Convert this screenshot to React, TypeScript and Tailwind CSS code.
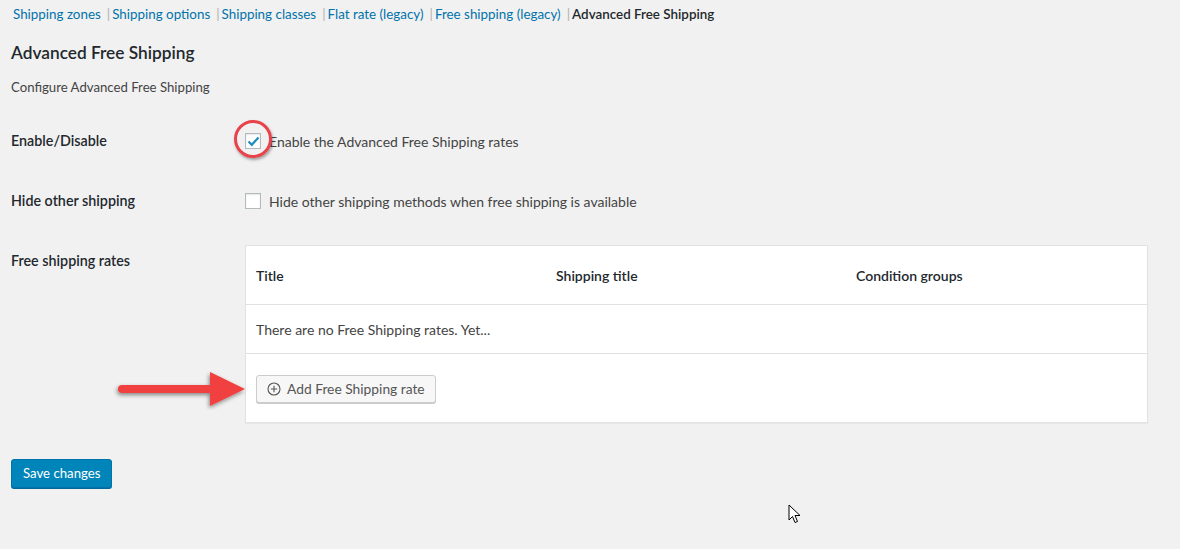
import React from 'react';

const font = { fontFamily: '"Lato", "Liberation Sans", sans-serif' };

const navLinks = ['Shipping zones', 'Shipping options', 'Shipping classes', 'Flat rate (legacy)', 'Free shipping (legacy)'];

const Arrow: React.FC = () => (
  <svg width="140" height="40" viewBox="0 0 140 40" className="absolute left-[110px] top-[370px]">
    <defs>
      <filter id="sh" x="-20%" y="-50%" width="140%" height="200%">
        <feDropShadow dx="-1" dy="2" stdDeviation="2" floodColor="#000" floodOpacity="0.45" />
      </filter>
    </defs>
    <g filter="url(#sh)">
      <line x1="12" y1="19" x2="104" y2="19" stroke="#f04040" strokeWidth="8" strokeLinecap="round" />
      <polygon points="100,2 135,19 100,36" fill="#f04040" />
    </g>
  </svg>
);

const Cursor: React.FC = () => (
  <svg width="14" height="20" viewBox="0 0 14 20" className="absolute left-[788px] top-[504px]">
    <path d="M1 1 L1 16 L4.5 12.5 L7 18.5 L9.5 17.5 L7 11.5 L12 11.5 Z" fill="#fff" stroke="#000" strokeWidth="1" strokeLinejoin="round" />
  </svg>
);

const App: React.FC = () => {
  return (
    <div className="relative w-[1180px] h-[549px] bg-[#f1f1f1] overflow-hidden text-[13px] text-[#444]" style={font}>
      {/* Sub navigation */}
      <div className="flex items-center pl-[13px] pt-[7px] h-[22px] text-[13.4px]">
        {navLinks.map((l) => (
          <React.Fragment key={l}>
            <span className="text-[#0073aa]">{l}</span>
            <span className="text-[#b0b0b0] pl-[6px] pr-[2px]">|</span>
          </React.Fragment>
        ))}
        <span className="text-[#23282d] font-semibold">Advanced Free Shipping</span>
      </div>

      <h2 className="pl-[11px] mt-[20px] text-[17.3px] font-semibold text-[#23282d] leading-[22px]">Advanced Free Shipping</h2>
      <p className="pl-[11px] mt-[14px] text-[13.2px] text-[#444] leading-[18px]">Configure Advanced Free Shipping</p>

      {/* Form */}
      <div className="pl-[11px] mt-[33px] flex flex-col">
        <div className="flex items-center h-[24px]">
          <div className="w-[234px] text-[14.3px] font-semibold text-[#23282d]">Enable/Disable</div>
          <div className="relative flex items-center">
            <span className="absolute left-[-11px] top-[-11px] w-[38px] h-[38px] rounded-full border-[3px] border-[#e8424a] shadow-[1px_2px_3px_rgba(0,0,0,0.35)]"></span>
            <span className="w-[16px] h-[16px] border border-[#b4b9be] bg-white shadow-[inset_0_1px_2px_rgba(0,0,0,0.1)] flex items-center justify-center">
              <svg width="13" height="11" viewBox="0 0 13 11">
                <path d="M1.5 5.5 L4.8 8.8 L11.5 1.5" fill="none" stroke="#1e8cbe" strokeWidth="2.2" />
              </svg>
            </span>
            <span className="ml-[8px] text-[14px] text-[#444]">Enable the Advanced Free Shipping rates</span>
          </div>
        </div>

        <div className="flex items-center h-[24px] mt-[36px]">
          <div className="w-[234px] text-[14.3px] font-semibold text-[#23282d]">Hide other shipping</div>
          <span className="w-[16px] h-[16px] border border-[#b4b9be] bg-white shadow-[inset_0_1px_2px_rgba(0,0,0,0.1)]"></span>
          <span className="ml-[8px] text-[14px] text-[#444]">Hide other shipping methods when free shipping is available</span>
        </div>

        <div className="flex mt-[32px]">
          <div className="w-[234px] pt-[5px] text-[14.3px] font-semibold text-[#23282d]">Free shipping rates</div>
          <div className="w-[903px] bg-white border border-[#e2e2e2] shadow-[0_1px_1px_rgba(0,0,0,0.04)]">
            <div className="grid grid-cols-[300px_300px_1fr] h-[59px] items-center border-b border-[#e1e1e1] px-[10px] text-[14px] font-semibold text-[#23282d]">
              <span>Title</span>
              <span>Shipping title</span>
              <span>Condition groups</span>
            </div>
            <div className="h-[49px] flex items-center px-[10px] border-b border-[#e1e1e1] text-[14px] text-[#444]">
              There are no Free Shipping rates. Yet...
            </div>
            <div className="h-[68px] flex items-center px-[10px] pt-[2px]">
              <button className="h-[28px] px-[10px] flex items-center gap-[6px] bg-[#f7f7f7] border border-[#cccccc] rounded-[3px] shadow-[0_1px_0_#ccc] text-[13.8px] text-[#555]">
                <svg width="14" height="14" viewBox="0 0 14 14">
                  <circle cx="7" cy="7" r="6" fill="none" stroke="#555" strokeWidth="1.1" />
                  <path d="M7 3.8 V10.2 M3.8 7 H10.2" stroke="#555" strokeWidth="1.1" />
                </svg>
                Add Free Shipping rate
              </button>
            </div>
          </div>
        </div>

        <div className="mt-[36px]">
          <button className="h-[29px] px-[11px] bg-[#0085ba] border border-[#0073aa] rounded-[3px] shadow-[0_1px_0_#006799] text-[13.2px] text-white">
            Save changes
          </button>
        </div>
      </div>

      <Arrow />
      <Cursor />
    </div>
  );
};

export default App;
